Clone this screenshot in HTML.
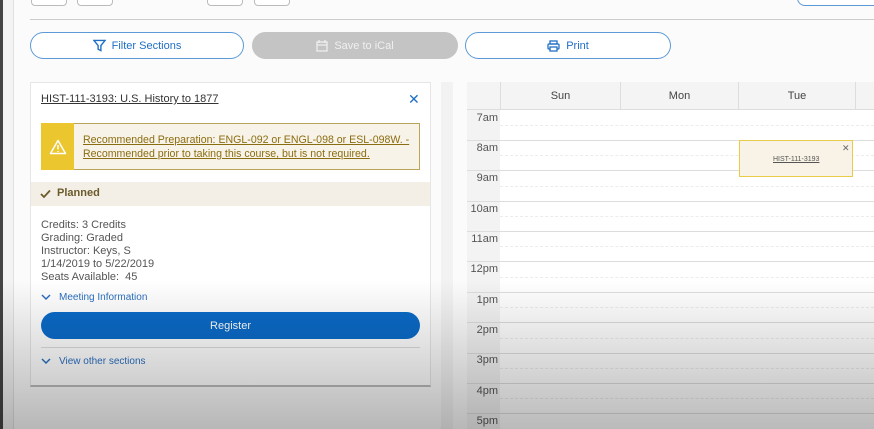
<!DOCTYPE html>
<html><head><style>
*{margin:0;padding:0;box-sizing:border-box}
body{width:874px;height:429px;overflow:hidden;background:#fbfbfb;font-family:"Liberation Sans",sans-serif;position:relative}
.abs{position:absolute}
.btn{position:absolute;border:1px solid #5b9ad6;border-radius:14px;background:#fff;color:#1f6fc5;font-size:11px;display:flex;align-items:center;justify-content:center;gap:6px}
.hr{position:absolute;left:500px;right:0;border-top:1px solid #ddd}
.dash{position:absolute;left:500px;right:0;border-top:1px dashed #ececec}
.tl{position:absolute;left:467px;width:31px;text-align:right;font-size:11px;color:#555}
</style></head><body>
<div class="abs" style="left:0;top:0;width:3px;height:429px;background:#444"></div>
<div class="abs" style="left:3px;top:0;width:11px;height:429px;background:#f3f3f3;border-right:1px solid #e0e0e0"></div>
<div class="abs" style="left:31px;top:-8px;width:36px;height:14px;border:1px solid #bbb;border-radius:4px;background:#fff"></div>
<div class="abs" style="left:77px;top:-8px;width:36px;height:14px;border:1px solid #bbb;border-radius:4px;background:#fff"></div>
<div class="abs" style="left:207px;top:-8px;width:36px;height:14px;border:1px solid #bbb;border-radius:4px;background:#fff"></div>
<div class="abs" style="left:254px;top:-8px;width:36px;height:14px;border:1px solid #bbb;border-radius:4px;background:#fff"></div>
<div class="abs" style="left:797px;top:-10px;width:90px;height:16px;border:1px solid #5b9ad6;border-radius:8px;background:#fff"></div>
<div class="abs" style="left:30px;top:19px;width:844px;border-top:1px solid #ccc"></div>
<div class="btn" style="left:30px;top:32px;width:214px;height:27px"><svg width="13" height="13" viewBox="0 0 14 14"><path d="M1 1.5h12L8.5 7v5.5l-3-1.5V7z" fill="none" stroke="#1f6fc5" stroke-width="1.5"/></svg>Filter Sections</div>
<div class="btn" style="left:252px;top:32px;width:206px;height:27px;background:#c4c4c4;border-color:#c4c4c4;color:#f0f0f0"><svg width="12" height="12" viewBox="0 0 12 12"><rect x="1" y="2" width="10" height="9" fill="none" stroke="#eee" stroke-width="1.3"/><path d="M3 0v3M9 0v3M1 5h10" stroke="#eee" stroke-width="1.3"/></svg>Save to iCal</div>
<div class="btn" style="left:465px;top:32px;width:206px;height:27px"><svg width="13" height="12" viewBox="0 0 13 12"><rect x="3" y="1" width="7" height="3" fill="none" stroke="#1f6fc5" stroke-width="1.3"/><rect x="1" y="4" width="11" height="5" rx="1" fill="none" stroke="#1f6fc5" stroke-width="1.3"/><rect x="3" y="7" width="7" height="4" fill="#fff" stroke="#1f6fc5" stroke-width="1.3"/></svg>Print</div>
<div class="abs" style="left:30px;top:82px;width:401px;height:305px;background:#fff;border:1px solid #e6e6e6;border-bottom:2px solid #bbb"></div>
<div class="abs" style="left:41px;top:93px;font-size:11px;color:#333;text-decoration:underline">HIST-111-3193: U.S. History to 1877</div>
<div class="abs" style="left:408px;top:91px;font-size:14px;color:#1f6fc5">✕</div>
<div class="abs" style="left:41px;top:123px;width:379px;height:47px;border:1px solid #b9a45c;background:#f8f3e9"></div>
<div class="abs" style="left:41px;top:123px;width:33px;height:47px;background:#ecc62f;display:flex;align-items:center;justify-content:center"><svg width="18" height="16" viewBox="0 0 18 16"><path d="M9 1.5L16.5 14.5H1.5z" fill="none" stroke="#fff" stroke-width="1.5" stroke-linejoin="round"/><path d="M9 6v4.5M9 12v1" stroke="#fff" stroke-width="1.5"/></svg></div>
<div class="abs" style="left:83px;top:133px;font-size:10.6px;line-height:14px;color:#8a6d10;text-decoration:underline;white-space:nowrap">Recommended Preparation: ENGL-092 or ENGL-098 or ESL-098W. -<br>Recommended prior to taking this course, but is not required.</div>
<div class="abs" style="left:31px;top:182px;width:399px;height:24px;background:#f4efe6"></div>
<svg class="abs" style="left:40px;top:189px" width="11" height="10" viewBox="0 0 11 10"><path d="M1 5l3 3L10 1.5" fill="none" stroke="#6b5a2a" stroke-width="1.8"/></svg>
<div class="abs" style="left:57px;top:187px;font-size:11px;font-weight:bold;color:#6b5a2a">Planned</div>
<div class="abs" style="left:41px;top:219px;font-size:11px;line-height:13px;color:#555">Credits: 3 Credits<br>Grading: Graded<br>Instructor: Keys, S<br>1/14/2019 to 5/22/2019<br>Seats Available:&nbsp; 45</div>
<svg class="abs" style="left:41px;top:294px" width="10" height="7" viewBox="0 0 10 7"><path d="M1 1l4 4 4-4" fill="none" stroke="#2a6fc0" stroke-width="1.5"/></svg>
<div class="abs" style="left:59px;top:292px;font-size:10px;color:#2a6fc0">Meeting Information</div>
<div class="abs" style="left:41px;top:312px;width:379px;height:27px;background:#0b6bc8;border-radius:14px;color:#fff;font-size:11px;display:flex;align-items:center;justify-content:center">Register</div>
<div class="abs" style="left:41px;top:347px;width:379px;border-top:1px solid #ddd"></div>
<svg class="abs" style="left:41px;top:358px" width="10" height="7" viewBox="0 0 10 7"><path d="M1 1l4 4 4-4" fill="none" stroke="#2a6fc0" stroke-width="1.5"/></svg>
<div class="abs" style="left:59px;top:356px;font-size:10px;color:#2a6fc0">View other sections</div>
<div class="abs" style="left:441px;top:82px;width:12px;height:347px;background:#f2f2f2"></div>
<div class="abs" style="left:467px;top:82px;width:407px;height:347px;background:#fff"></div>
<div class="abs" style="left:467px;top:82px;width:33px;height:347px;background:#f3f3f3"></div>
<div class="abs" style="left:467px;top:82px;width:407px;height:28px;background:#f4f4f4;border-bottom:1px solid #ddd"></div>
<div class="abs" style="left:500px;top:82px;width:120px;height:28px;border-left:1px solid #ddd;font-size:11px;color:#444;text-align:center;line-height:28px">Sun</div>
<div class="abs" style="left:620px;top:82px;width:118px;height:28px;border-left:1px solid #ddd;font-size:11px;color:#444;text-align:center;line-height:28px">Mon</div>
<div class="abs" style="left:738px;top:82px;width:118px;height:28px;border-left:1px solid #ddd;border-right:1px solid #ddd;font-size:11px;color:#444;text-align:center;line-height:28px">Tue</div>
<div class="dash" style="top:125px"></div><div class="hr" style="top:140px;left:467px"></div>
<div class="dash" style="top:155px"></div><div class="hr" style="top:170px;left:467px"></div>
<div class="dash" style="top:186px"></div><div class="hr" style="top:201px;left:467px"></div>
<div class="dash" style="top:216px"></div><div class="hr" style="top:231px;left:467px"></div>
<div class="dash" style="top:246px"></div><div class="hr" style="top:261px;left:467px"></div>
<div class="dash" style="top:277px"></div><div class="hr" style="top:292px;left:467px"></div>
<div class="dash" style="top:307px"></div><div class="hr" style="top:322px;left:467px"></div>
<div class="dash" style="top:338px"></div><div class="hr" style="top:353px;left:467px"></div>
<div class="dash" style="top:368px"></div><div class="hr" style="top:383px;left:467px"></div>
<div class="dash" style="top:398px"></div><div class="hr" style="top:413px;left:467px"></div>
<div class="tl" style="top:112px">7am</div><div class="tl" style="top:142px">8am</div><div class="tl" style="top:172px">9am</div><div class="tl" style="top:203px">10am</div><div class="tl" style="top:233px">11am</div><div class="tl" style="top:263px">12pm</div><div class="tl" style="top:294px">1pm</div><div class="tl" style="top:324px">2pm</div><div class="tl" style="top:354px">3pm</div><div class="tl" style="top:385px">4pm</div><div class="tl" style="top:415px">5pm</div>
<div class="abs" style="left:739px;top:140px;width:114px;height:37px;background:#f8f3e6;border:1px solid #e8cc4a"></div>
<div class="abs" style="left:773px;top:156px;font-size:7px;color:#555;text-decoration:underline">HIST-111-3193</div>
<div class="abs" style="left:842px;top:143px;font-size:9px;color:#666">✕</div>
<div class="abs" style="left:0;top:0;width:874px;height:429px;background:linear-gradient(to bottom,rgba(0,0,0,0) 0,rgba(0,0,0,0) 280px,rgba(0,0,0,0.27) 429px);pointer-events:none"></div>
</body></html>
